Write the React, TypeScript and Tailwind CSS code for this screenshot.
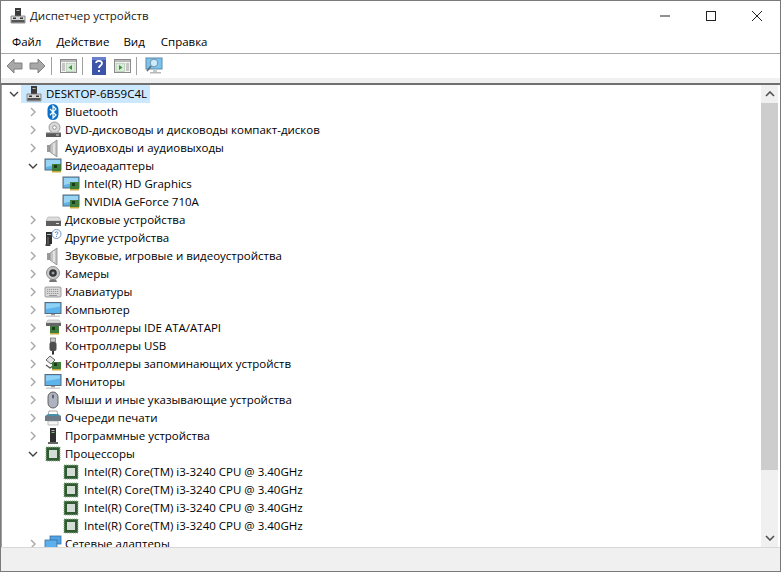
import React from "react";

type P = { children?: React.ReactNode };
const Svg = ({ children, w = 18, h = 18 }: P & { w?: number; h?: number }) => (
  <svg width={w} height={h} viewBox={`0 0 ${w} ${h}`} className="block shrink-0">{children}</svg>
);

const Board = ({ x = 8, y = 8 }: { x?: number; y?: number }) => (
  <g>
    <rect x={x} y={y} width="9" height="7" fill="#3e7d3a" />
    <rect x={x + 2} y={y + 1} width="3" height="3" fill="#1d3b1c" />
    <rect x={x} y={y + 7} width="9" height="1.5" fill="#c9a93c" />
  </g>
);

const PcTower = () => (
  <Svg>
    <path d="M6 1h6v9H6z" fill="#3a3a3a" />
    <rect x="7.500" y="3" width="3" height="1" fill="#bbb" />
    <path d="M2 9h14v7H2z" fill="#d6d6d6" stroke="#777" strokeWidth="0.8" />
    <rect x="2.500" y="13" width="13" height="2.500" fill="#555" />
    <rect x="4" y="10.500" width="3" height="1.500" fill="#333" />
    <rect x="11" y="10.500" width="3" height="1.500" fill="#333" />
  </Svg>
);
const Bluetooth = () => (
  <Svg>
    <rect x="3.500" y="1" width="11" height="16" rx="5.500" fill="#0a72c9" />
    <path d="M6 6l6 6-3 3V3l3 3-6 6" fill="none" stroke="#fff" strokeWidth="1.200" />
  </Svg>
);
const Disc = () => (
  <Svg>
    <circle cx="10.500" cy="6.500" r="5.500" fill="#d8d8d8" stroke="#888" strokeWidth="0.800" />
    <circle cx="10.500" cy="6.500" r="1.800" fill="#fff" stroke="#777" strokeWidth="0.700" />
    <path d="M2 12h15v4H2z" fill="#5a5a5a" />
    <rect x="2" y="11" width="15" height="1.200" fill="#b5b5b5" />
    <rect x="12" y="13.500" width="3" height="1" fill="#ddd" />
  </Svg>
);
const Speaker = () => (
  <Svg>
    <rect x="3" y="6" width="3" height="7" fill="#9a9a9a" />
    <path d="M6 6l7-5v17l-7-5z" fill="#c4c4c4" stroke="#8c8c8c" strokeWidth="0.800" />
    <path d="M10 4v11" stroke="#e2e2e2" strokeWidth="2" />
  </Svg>
);
const Monitor = () => (
  <Svg>
    <rect x="1" y="2" width="16" height="11" fill="#5fb2e8" stroke="#5a6a78" strokeWidth="1" />
    <path d="M2 3h14v4L2 10z" fill="#9ad4f5" />
    <Board x={8} y={7} />
  </Svg>
);
const DiskDrive = () => (
  <Svg>
    <path d="M4 6h11l2 4H2z" fill="#dcdcdc" stroke="#aaa" strokeWidth="0.600" />
    <rect x="2" y="10" width="15" height="5" fill="#5e5e5e" />
    <rect x="12" y="12" width="3" height="1" fill="#ddd" />
  </Svg>
);
const Other = () => (
  <Svg>
    <path d="M2 3h6v12H2z" fill="#2e2e2e" />
    <rect x="3" y="5" width="4" height="1" fill="#bbb" />
    <rect x="3" y="8" width="2" height="7" fill="#555" />
    <rect x="1.500" y="15" width="5" height="2" fill="#444" />
    <circle cx="12.500" cy="5" r="4.500" fill="#fff" stroke="#5f8fc0" strokeWidth="0.900" />
    <path d="M11 4c.3-1.600 3-1.600 3 0 0 1-1.500 1-1.500 2.200M12.500 7v.9" fill="none" stroke="#4a7cb0" strokeWidth="0.900" />
  </Svg>
);
const Camera = () => (
  <Svg>
    <circle cx="9" cy="8" r="6.500" fill="#c9c9c9" stroke="#777" strokeWidth="0.800" />
    <circle cx="9" cy="8" r="3.800" fill="#333" />
    <circle cx="9" cy="8" r="1.500" fill="#8fa0b0" />
    <path d="M6 14.500h6l1 2.500H5z" fill="#777" />
  </Svg>
);
const Keyboard = () => (
  <Svg>
    <rect x="1" y="4" width="16" height="10" rx="1" fill="#d8d8d8" stroke="#8c8c8c" strokeWidth="0.800" />
    <path d="M3 6.500h12M3 8.500h12M3 10.500h12" stroke="#9a9a9a" strokeWidth="1" strokeDasharray="1.200 0.800" />
    <rect x="5" y="12" width="8" height="1" fill="#9a9a9a" />
  </Svg>
);
const Computer = () => (
  <Svg>
    <rect x="1" y="1.500" width="16" height="11" fill="#5db4ec" stroke="#5a6a78" strokeWidth="1" />
    <path d="M2 2.500h14v3L2 8z" fill="#8fd0f5" />
    <rect x="7" y="13" width="4" height="1.500" fill="#9a9a9a" />
    <rect x="2" y="14.500" width="14" height="1.500" fill="#cfcfcf" />
  </Svg>
);
const Ide = () => (
  <Svg>
    <path d="M4 1h11l2 3H2z" fill="#dcdcdc" stroke="#aaa" strokeWidth="0.600" />
    <rect x="2" y="4" width="15" height="3" fill="#666" />
    <Board x={6} y={7} />
  </Svg>
);
const Usb = () => (
  <Svg>
    <rect x="6.500" y="1" width="5" height="4" fill="#c8c8c8" stroke="#666" strokeWidth="0.700" />
    <rect x="5.500" y="5" width="7" height="9" rx="2" fill="#4d4d4d" />
    <rect x="8" y="14" width="2" height="3.500" fill="#333" />
  </Svg>
);
const Storage = () => (
  <Svg>
    <path d="M2 5l4-4 5 4-4 4z" fill="#e4e4e4" stroke="#555" strokeWidth="0.900" />
    <path d="M2 10l4 3 3-2" fill="none" stroke="#555" strokeWidth="1.200" />
    <Board x={8} y={7} />
  </Svg>
);
const Mouse = () => (
  <Svg>
    <rect x="4" y="1" width="10" height="16" rx="5" fill="#aeb4bf" stroke="#555" strokeWidth="0.900" />
    <rect x="8" y="3.500" width="2" height="4" rx="1" fill="#5b6270" />
  </Svg>
);
const Printer = () => (
  <Svg>
    <path d="M5 2h8l1 5H4z" fill="#fff" stroke="#888" strokeWidth="0.700" />
    <rect x="1" y="7" width="16" height="5" fill="#6d7a85" />
    <path d="M1 7l3-2h10l3 2z" fill="#4a90a8" />
    <path d="M4 12h10v4H4z" fill="#f7f7f7" stroke="#999" strokeWidth="0.600" />
  </Svg>
);
const Software = () => (
  <Svg>
    <path d="M6 1h6v14H6z" fill="#2f2f2f" />
    <rect x="7.500" y="3" width="3" height="1" fill="#bbb" />
    <rect x="7.500" y="5" width="3" height="1" fill="#7cc07c" />
    <rect x="4" y="15" width="10" height="2" fill="#666" />
  </Svg>
);
const Cpu = () => (
  <Svg>
    <rect x="2" y="2" width="14" height="14" fill="#3d6b3d" stroke="#8fae8f" strokeWidth="1" strokeDasharray="1 1" />
    <rect x="3" y="3" width="12" height="12" fill="#2f5a32" />
    <rect x="5" y="5" width="8" height="8" fill="#d3dcd5" />
  </Svg>
);
const Network = () => (
  <Svg>
    <rect x="6" y="1" width="11" height="8" fill="#4ea4e6" stroke="#3d6e9a" strokeWidth="0.800" />
    <rect x="1" y="5" width="12" height="9" fill="#5cb0ee" stroke="#3d6e9a" strokeWidth="0.800" />
  </Svg>
);

type Row = { label: string; icon: React.ReactNode; state?: "open" | "closed"; child?: boolean };

const rows: Row[] = [
  { label: "Bluetooth", icon: <Bluetooth />, state: "closed" },
  { label: "DVD-дисководы и дисководы компакт-дисков", icon: <Disc />, state: "closed" },
  { label: "Аудиовходы и аудиовыходы", icon: <Speaker />, state: "closed" },
  { label: "Видеоадаптеры", icon: <Monitor />, state: "open" },
  { label: "Intel(R) HD Graphics", icon: <Monitor />, child: true },
  { label: "NVIDIA GeForce 710A", icon: <Monitor />, child: true },
  { label: "Дисковые устройства", icon: <DiskDrive />, state: "closed" },
  { label: "Другие устройства", icon: <Other />, state: "closed" },
  { label: "Звуковые, игровые и видеоустройства", icon: <Speaker />, state: "closed" },
  { label: "Камеры", icon: <Camera />, state: "closed" },
  { label: "Клавиатуры", icon: <Keyboard />, state: "closed" },
  { label: "Компьютер", icon: <Computer />, state: "closed" },
  { label: "Контроллеры IDE ATA/ATAPI", icon: <Ide />, state: "closed" },
  { label: "Контроллеры USB", icon: <Usb />, state: "closed" },
  { label: "Контроллеры запоминающих устройств", icon: <Storage />, state: "closed" },
  { label: "Мониторы", icon: <Computer />, state: "closed" },
  { label: "Мыши и иные указывающие устройства", icon: <Mouse />, state: "closed" },
  { label: "Очереди печати", icon: <Printer />, state: "closed" },
  { label: "Программные устройства", icon: <Software />, state: "closed" },
  { label: "Процессоры", icon: <Cpu />, state: "open" },
  { label: "Intel(R) Core(TM) i3-3240 CPU @ 3.40GHz", icon: <Cpu />, child: true },
  { label: "Intel(R) Core(TM) i3-3240 CPU @ 3.40GHz", icon: <Cpu />, child: true },
  { label: "Intel(R) Core(TM) i3-3240 CPU @ 3.40GHz", icon: <Cpu />, child: true },
  { label: "Intel(R) Core(TM) i3-3240 CPU @ 3.40GHz", icon: <Cpu />, child: true },
  { label: "Сетевые адаптеры", icon: <Network />, state: "closed" },
];

const Chevron = ({ state }: { state?: "open" | "closed" }) => (
  <svg width="12" height="18" viewBox="0 0 12 18" className="block shrink-0">
    {state === "open" && <path d="M2 7l4 4 4-4" fill="none" stroke="#404040" strokeWidth="1.400" />}
    {state === "closed" && <path d="M4 5l4 4-4 4" fill="none" stroke="#a6a6a6" strokeWidth="1.400" />}
  </svg>
);

const ToolSep = () => <div className="w-px h-[18px] bg-[#a0a0a0] ml-[5px]" />;

const ArrowIcon = ({ flip }: { flip?: boolean }) => (
  <svg width="17" height="16" viewBox="0 0 17 16" className="block">
    <path d={flip ? "M1 5h8V1l7 7-7 7v-4H1z" : "M16 5H8V1L1 8l7 7v-4h8z"} fill="#a8a8a8" stroke="#808080" strokeWidth="1" />
  </svg>
);
const PanelIcon = ({ right }: { right?: boolean }) => (
  <svg width="17" height="16" viewBox="0 0 17 16" className="block">
    <rect x="0.500" y="1.500" width="16" height="13" fill="#f2f2f2" stroke="#8a8a8a" />
    <rect x="1" y="2" width="15" height="2" fill="#b8b8b8" />
    <path d={right ? "M12 6h3M12 8h3M12 10h3M12 12h3" : "M2 6h3M2 8h3M2 10h3M2 12h3"} stroke="#9a9a9a" strokeWidth="1" />
    <rect x={right ? 2 : 6.500} y="5.500" width="8.500" height="8" fill="#d9ecd9" stroke="#a9c4a9" strokeWidth="0.600" />
    <path d={right ? "M5 7l3.500 2.500L5 12z" : "M12 7L8.500 9.500 12 12z"} fill="#3e8f3e" />
  </svg>
);
const HelpIcon = () => (
  <svg width="14" height="18" viewBox="0 0 14 18" className="block">
    <rect width="14" height="18" fill="#3d55a8" />
    <rect width="14" height="3" fill="#6a80cc" />
    <path d="M4 6c.4-3 6-3 6 .3 0 2.300-3 2.200-3 4.700M7 13v2" fill="none" stroke="#fff" strokeWidth="1.800" />
  </svg>
);
const ScanIcon = () => (
  <svg width="18" height="18" viewBox="0 0 18 18" className="block">
    <rect x="1" y="1" width="16" height="11" fill="#7cc4ef" stroke="#5c8aa8" strokeWidth="1" />
    <circle cx="9" cy="6" r="3.800" fill="#cfeafb" stroke="#6f95ad" strokeWidth="1" />
    <path d="M6 9l-4 5" stroke="#5d6a70" strokeWidth="1.600" />
    <rect x="5" y="15" width="11" height="1.500" fill="#b8b8b8" />
    <rect x="8" y="12.500" width="4" height="2.500" fill="#c8c8c8" />
  </svg>
);

export default function App() {
  return (
    <div className="w-[781px] h-[572px] flex flex-col bg-white overflow-hidden border-x border-t border-[#7a7a7a] text-[#000] text-[11.5px] font-['Open_Sans','Noto_Sans',sans-serif]">
      <div className="h-[30px] shrink-0 flex items-center">
        <div className="pl-[8px] pr-[3px]"><PcTower /></div>
        <span className="text-[#1a1a1a]">Диспетчер устройств</span>
        <div className="ml-auto flex items-center text-black">
          <svg width="46" height="30" viewBox="0 0 46 30" className="block"><path d="M18 15h10" stroke="#222" strokeWidth="1" /></svg>
          <svg width="46" height="30" viewBox="0 0 46 30" className="block"><rect x="18.500" y="10.500" width="9" height="9" fill="none" stroke="#222" strokeWidth="1" /></svg>
          <svg width="46" height="30" viewBox="0 0 46 30" className="block"><path d="M18 10l10 10M28 10L18 20" stroke="#222" strokeWidth="1" /></svg>
        </div>
      </div>
      <div className="h-[23px] shrink-0 flex items-center border-b border-[#a8a8a8] pl-[3px]">
        <span className="pl-[8px] pr-[7px]">Файл</span>
        <span className="pl-[8px] pr-[6px]">Действие</span>
        <span className="px-[8px]">Вид</span>
        <span className="px-[8px]">Справка</span>
      </div>
      <div className="h-[24px] shrink-0 flex items-center pl-[5px]">
        <ArrowIcon />
        <div className="ml-[6px]"><ArrowIcon flip /></div>
        <ToolSep />
        <div className="ml-[8px]"><PanelIcon /></div>
        <ToolSep />
        <div className="ml-[9px]"><HelpIcon /></div>
        <div className="ml-[8px]"><PanelIcon right /></div>
        <ToolSep />
        <div className="ml-[8px]"><ScanIcon /></div>
      </div>
      <div className="h-[5px] shrink-0 bg-[#f0f0f0]" />
      <div className="h-[2px] shrink-0 bg-[#707070]" />
      <div className="flex-1 min-h-0 flex pl-px pr-[2px]">
        <div className="flex-1 min-w-0 overflow-hidden border-l border-[#a0a0a0] -ml-px pl-px">
          <div className="h-[18px] flex items-center pl-[5px]">
            <Chevron state="open" />
            <div className="flex items-center bg-[#cce8ff] h-[18px] pl-[4px] pr-[3px] ml-[1px]">
              <PcTower />
              <span className="ml-[3px]">DESKTOP-6B59C4L</span>
            </div>
          </div>
          {rows.map((r, i) => (
            <div key={i} className={`h-[18px] flex items-center whitespace-nowrap ${r.child ? "pl-[59px]" : "pl-[24px]"}`}>
              {!r.child && <Chevron state={r.state} />}
              <div className={r.child ? "" : "ml-[5px]"}><span className="block w-[18px]">{r.icon}</span></div>
              <span className={r.child ? "ml-[4px]" : "ml-[3px]"}>{r.label}</span>
            </div>
          ))}
        </div>
        <div className="w-[17px] shrink-0 bg-[#f0f0f0] flex flex-col">
          <div className="h-[18px] flex items-center justify-center">
            <svg width="10" height="6" viewBox="0 0 10 6" className="block"><path d="M1 5l4-4 4 4" fill="none" stroke="#505050" strokeWidth="1.600" /></svg>
          </div>
          <div className="h-[367px] bg-[#cdcdcd]" />
          <div className="flex-1" />
          <div className="h-[18px] flex items-center justify-center">
            <svg width="10" height="6" viewBox="0 0 10 6" className="block"><path d="M1 1l4 4 4-4" fill="none" stroke="#505050" strokeWidth="1.600" /></svg>
          </div>
        </div>
      </div>
      <div className="h-[25px] shrink-0 bg-[#f0f0f0] border-t border-b border-[#d8d8d8] border-b-[#7a7a7a]" />
    </div>
  );
}
